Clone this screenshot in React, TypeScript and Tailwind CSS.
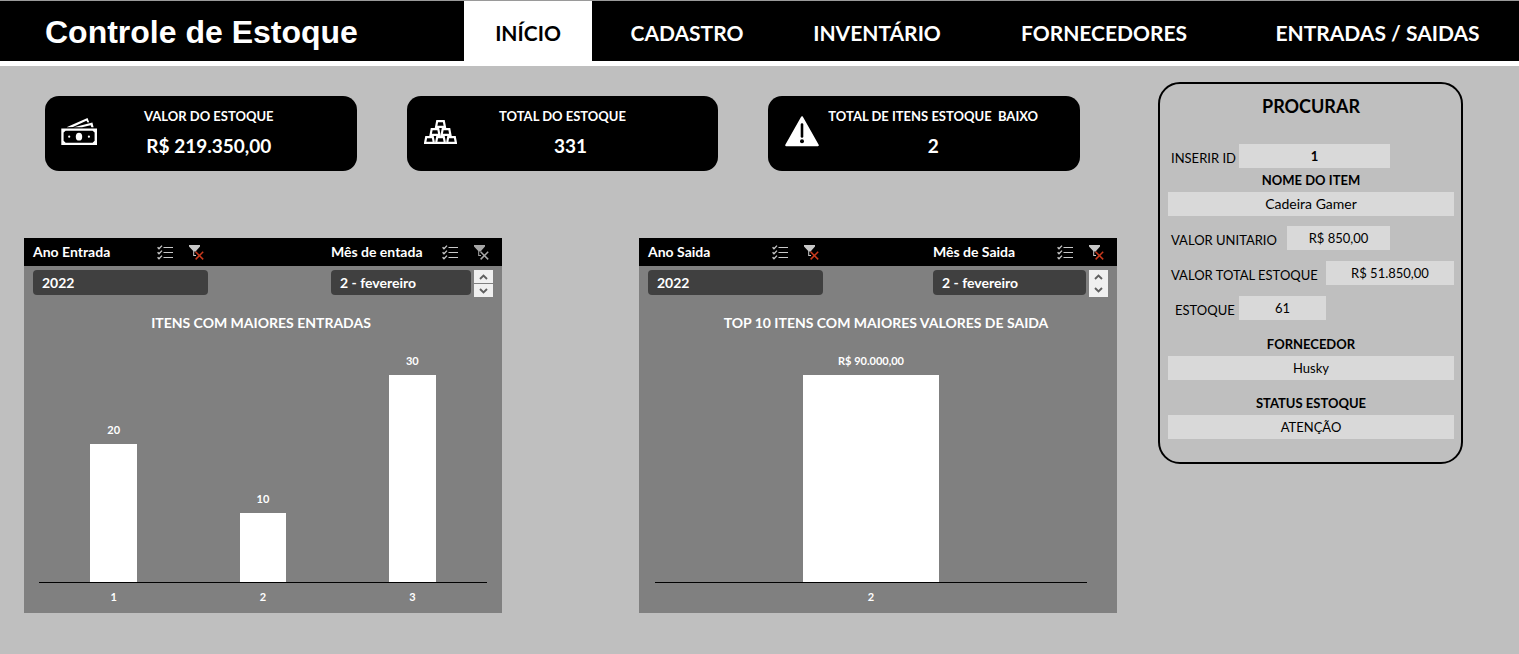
import type { ReactNode } from "react";

function MoneyIcon() {
  return (
    <svg width="36" height="28" viewBox="0 0 36 28" aria-hidden="true">
      <path d="M5.5 9.2 26.5 0 28.2 4.2 26.6 4.6 25.4 2.8 12 9z" fill="#fff" />
      <path d="M13 9.2 31.4 4.6 32.6 9.2 30.4 9.2 29.6 7.2 21 9.2z" fill="#fff" />
      <path
        fillRule="evenodd"
        d="M.3 10.5H36V27H.3zM4.6 12.8 2.6 14.6v8.2l2 1.9h27l2-1.9v-8.2l-2-1.8z"
        fill="#fff"
      />
      <ellipse cx="18" cy="18.7" rx="3.2" ry="3.9" fill="#fff" />
      <circle cx="8.2" cy="18.7" r="1.1" fill="#fff" />
      <circle cx="27.9" cy="18.7" r="1.1" fill="#fff" />
    </svg>
  );
}

const bricks = [
  [11, 0],
  [5.5, 8],
  [16.5, 8],
  [0, 16],
  [11, 16],
  [22, 16],
];

function BricksIcon() {
  return (
    <svg width="33" height="24" viewBox="0 0 33 24" aria-hidden="true">
      {bricks.map(([x, y]) => (
        <path
          key={`${x}-${y}`}
          d={`M${x + 2.2} ${y + 1.1}h6.6l1.1 5.8h-8.8z`}
          fill="none"
          stroke="#fff"
          strokeWidth="2.2"
        />
      ))}
    </svg>
  );
}

function WarningIcon() {
  return (
    <svg width="34" height="31" viewBox="0 0 34 31" aria-hidden="true">
      <path
        d="M17 1.2 32.8 29.2H1.2z"
        fill="#fff"
        stroke="#fff"
        strokeWidth="2"
        strokeLinejoin="round"
      />
      <path d="M17 8.5v12" stroke="#000" strokeWidth="2.6" strokeLinecap="round" />
      <circle cx="17" cy="25.2" r="2" fill="#000" />
    </svg>
  );
}

function ChecklistIcon() {
  return (
    <svg width="16" height="15" viewBox="0 0 16 15" aria-hidden="true">
      <path d="M6.5 2.5H16M6.5 7.5H16M6.5 12.5H16" stroke="#c8c8c8" />
      <path
        d="M.6 2.2 2 3.8 5 .6M.6 7.2 2 8.8 5 5.6M.6 12.2 2 13.8 5 10.6"
        fill="none"
        stroke="#c8c8c8"
        strokeWidth="1.3"
      />
    </svg>
  );
}

function ClearFilterIcon({ active }: { active: boolean }) {
  return (
    <svg width="15" height="15" viewBox="0 0 15 15" aria-hidden="true">
      <path d="M0 0h11v1.6L7 6v5H4.2V6L0 1.6z" fill={active ? "#c8c8c8" : "#a6a6a6"} />
      <path d="M5.2 6.5h3V10h-3z" fill="#000" />
      <path
        d="M6.6 6.8 14.2 14.4M14.2 6.8 6.6 14.4"
        stroke={active ? "#c8391c" : "#a6a6a6"}
        strokeWidth="1.5"
      />
    </svg>
  );
}

const navItems = ["INÍCIO", "CADASTRO", "INVENTÁRIO", "FORNECEDORES", "ENTRADAS / SAIDAS"];

function Header() {
  return (
    <header className="grid h-[66px] grid-cols-[464fr_1055fr] border-t border-b-[5px] border-t-[#9a9a9a] border-b-white bg-black text-white">
      <h1 className="self-center pl-[45px] pt-0.5 font-['Liberation_Sans',sans-serif] text-[32px] font-bold leading-9">
        Controle de Estoque
      </h1>
      <nav className="grid grid-cols-[128fr_190fr_190fr_264fr_283fr] text-[21px] font-bold">
        {navItems.map((item, i) => (
          <a
            key={item}
            href="#"
            aria-current={i === 0 ? "page" : undefined}
            className={`flex items-center justify-center whitespace-nowrap pt-1 ${
              i === 0 ? "bg-white text-black" : ""
            }`}
          >
            {item}
          </a>
        ))}
      </nav>
    </header>
  );
}

type StatCardProps = { icon: ReactNode; label: string; value: string; labelClass?: string };

function StatCard({ icon, label, value, labelClass = "" }: StatCardProps) {
  return (
    <section className="grid h-[75px] grid-cols-[36px_1fr] items-center gap-2 rounded-[14px] bg-black pb-1 pl-4 pr-11 text-white">
      <div className="flex justify-center">{icon}</div>
      <div className="text-center">
        <h2 className={`whitespace-pre text-[13px] font-bold leading-5 ${labelClass}`}>{label}</h2>
        <p className="mt-2 text-[19px] font-bold leading-6">{value}</p>
      </div>
    </section>
  );
}

function SlicerHeader({ title, active }: { title: string; active: boolean }) {
  return (
    <div className="flex h-7 items-center pr-1">
      <h3 className="flex-1 whitespace-nowrap text-sm font-bold">{title}</h3>
      <button type="button" aria-label="Seleção múltipla">
        <ChecklistIcon />
      </button>
      <button type="button" aria-label="Limpar filtro" className="ml-4">
        <ClearFilterIcon active={active} />
      </button>
    </div>
  );
}

function SlicerItem({ children }: { children: ReactNode }) {
  return (
    <button
      type="button"
      className="h-[25px] w-full rounded bg-[#404040] px-[9px] text-left text-sm font-bold"
    >
      {children}
    </button>
  );
}

function Arrow({ up, divided }: { up?: boolean; divided: boolean }) {
  return (
    <button
      type="button"
      aria-label={up ? "Rolar para cima" : "Rolar para baixo"}
      className={`flex flex-1 items-center justify-center bg-[#f0f0f0] ${
        divided && up ? "border-b border-[#808080]" : ""
      }`}
    >
      <svg width="9" height="6" viewBox="0 0 9 6" aria-hidden="true">
        <path
          d={up ? "M1 5 4.5 1.5 8 5" : "M1 1 4.5 4.5 8 1"}
          fill="none"
          stroke="#606060"
          strokeWidth="1.9"
        />
      </svg>
    </button>
  );
}

type Bar = { name: string; label: string; share: number };

type ChartPanelProps = {
  yearTitle: string;
  monthTitle: string;
  monthWidth: string;
  monthFiltered: boolean;
  dividedArrows: boolean;
  title: string;
  titleClass: string;
  plotClass: string;
  columnsClass: string;
  bars: Bar[];
};

function ChartPanel(p: ChartPanelProps) {
  return (
    <section className="bg-[#808080] pb-1.5 text-white">
      <div className="flex justify-between bg-black px-[9px]">
        <div className="w-[175px]">
          <SlicerHeader title={p.yearTitle} active />
        </div>
        <div className={p.monthWidth}>
          <SlicerHeader title={p.monthTitle} active={p.monthFiltered} />
        </div>
      </div>
      <div className="flex h-[31px] items-start justify-between px-[9px] pt-1">
        <div className="flex w-[175px]">
          <SlicerItem>2022</SlicerItem>
        </div>
        <div className={`flex gap-[3px] ${p.monthWidth}`}>
          <SlicerItem>2 - fevereiro</SlicerItem>
          <div className="flex h-[27px] w-[19px] shrink-0 flex-col">
            <Arrow up divided={p.dividedArrows} />
            <Arrow divided={p.dividedArrows} />
          </div>
        </div>
      </div>
      <h2 className={`pt-4 text-center text-sm font-bold leading-5 ${p.titleClass}`}>{p.title}</h2>
      <div className={p.plotClass}>
        <div className={`mt-4 grid border-b border-black ${p.columnsClass}`}>
          {p.bars.map((bar) => (
            <div key={bar.name} className="flex h-[233px] flex-col items-center justify-end">
              <span className="mb-1 text-[11px] font-bold leading-5">{bar.label}</span>
              <div className="w-[31.4%] bg-white" style={{ height: Math.round(bar.share * 207) }} />
            </div>
          ))}
        </div>
        <div className={`grid pt-1 ${p.columnsClass}`}>
          {p.bars.map((bar) => (
            <span key={bar.name} className="text-center text-[11px] font-bold leading-5">
              {bar.name}
            </span>
          ))}
        </div>
      </div>
    </section>
  );
}

function InlineField({
  id,
  label,
  columns,
  labelInset = "pl-[3px]",
  children,
}: {
  id: string;
  label: string;
  columns: string;
  labelInset?: string;
  children: ReactNode;
}) {
  return (
    <div className={`grid items-center ${columns}`}>
      <label htmlFor={id} className={`whitespace-nowrap pt-1 text-[13px] leading-5 ${labelInset}`}>
        {label}
      </label>
      {children}
    </div>
  );
}

function Value({ id, size = "text-[13px]", children }: { id: string; size?: string; children: ReactNode }) {
  return (
    <output id={id} className={`block h-6 bg-[#d9d9d9] text-center ${size}`}>
      <span className="leading-6">{children}</span>
    </output>
  );
}

function StackedField({
  id,
  label,
  value,
  size,
}: {
  id: string;
  label: string;
  value: string;
  size?: string;
}) {
  return (
    <div>
      <label htmlFor={id} className="block text-center text-[13px] font-bold leading-6">
        {label}
      </label>
      <Value id={id} size={size}>
        {value}
      </Value>
    </div>
  );
}

function SearchPanel() {
  return (
    <aside className="mt-4 w-[305px] shrink-0 self-start rounded-[22px] border-2 border-black pb-[23px] pl-2 pr-[7px] pt-2 text-black">
      <h2 className="text-center text-lg font-bold leading-7">PROCURAR</h2>
      <div className="pt-6">
        <InlineField id="item-id" label="INSERIR ID" columns="grid-cols-[71px_151px]">
          <input
            id="item-id"
            defaultValue="1"
            className="h-6 w-full bg-[#d9d9d9] text-center text-[13px] font-bold outline-none"
          />
        </InlineField>
        <StackedField id="item-name" label="NOME DO ITEM" value="Cadeira Gamer" size="text-sm" />
      </div>
      <div className="flex flex-col gap-[11px] pt-[10px]">
        <InlineField id="unit" label="VALOR UNITARIO" columns="grid-cols-[119px_103px]">
          <Value id="unit">R$ 850,00</Value>
        </InlineField>
        <InlineField id="total" label="VALOR TOTAL ESTOQUE" columns="grid-cols-[158px_1fr]">
          <Value id="total">R$ 51.850,00</Value>
        </InlineField>
        <InlineField
          id="stock"
          label="ESTOQUE"
          columns="grid-cols-[71px_87px]"
          labelInset="pl-[7px]"
        >
          <Value id="stock">61</Value>
        </InlineField>
      </div>
      <div className="flex flex-col gap-[11px] pt-3">
        <StackedField id="supplier" label="FORNECEDOR" value="Husky" />
        <StackedField id="status" label="STATUS ESTOQUE" value="ATENÇÃO" />
      </div>
    </aside>
  );
}

export default function App() {
  return (
    <div className="min-h-screen bg-[#bfbfbf] font-[Lato,sans-serif]">
      <Header />
      <main className="flex gap-[41px] pl-6 pr-14">
        <div className="min-w-0 flex-1 pt-[30px]">
          <div className="grid grid-cols-3 gap-[50px] pl-[21px] pr-[37px]">
            <StatCard icon={<MoneyIcon />} label="VALOR DO ESTOQUE" value="R$ 219.350,00" />
            <StatCard
              icon={<BricksIcon />}
              label="TOTAL DO ESTOQUE"
              value="331"
              labelClass="pr-4"
            />
            <StatCard icon={<WarningIcon />} label="TOTAL DE ITENS ESTOQUE  BAIXO" value="2" />
          </div>
          <div className="mt-[67px] grid grid-cols-2 gap-[137px]">
            <ChartPanel
              yearTitle="Ano Entrada"
              monthTitle="Mês de entada"
              monthWidth="w-[162px]"
              monthFiltered={false}
              dividedArrows
              title="ITENS COM MAIORES ENTRADAS"
              titleClass="pr-1"
              plotClass="px-[15px]"
              columnsClass="grid-cols-3"
              bars={[
                { name: "1", label: "20", share: 2 / 3 },
                { name: "2", label: "10", share: 1 / 3 },
                { name: "3", label: "30", share: 1 },
              ]}
            />
            <ChartPanel
              yearTitle="Ano Saida"
              monthTitle="Mês de Saida"
              monthWidth="w-[175px]"
              monthFiltered
              dividedArrows={false}
              title="TOP 10 ITENS COM MAIORES VALORES DE SAIDA"
              titleClass="pl-4"
              plotClass="pl-4 pr-[30px]"
              columnsClass="grid-cols-1"
              bars={[{ name: "2", label: "R$ 90.000,00", share: 1 }]}
            />
          </div>
        </div>
        <SearchPanel />
      </main>
    </div>
  );
}
